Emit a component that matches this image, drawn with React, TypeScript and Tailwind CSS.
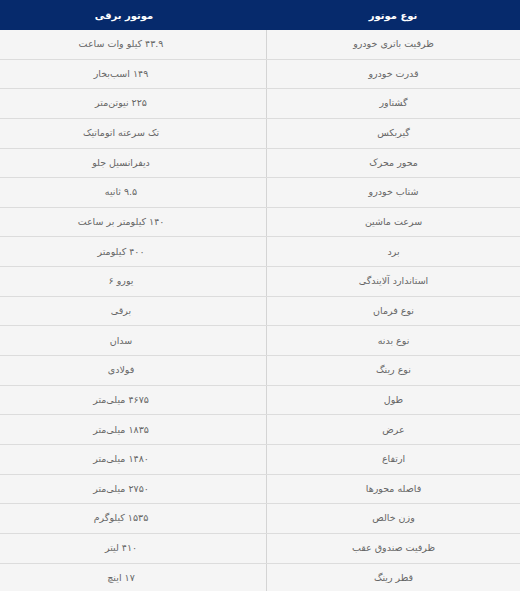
const rows: [string, string][] = [
  ["ظرفیت باتری خودرو", "۴۳.۹ کیلو وات ساعت"],
  ["قدرت خودرو", "۱۴۹ اسب‌بخار"],
  ["گشتاور", "۲۲۵ نیوتن‌متر"],
  ["گیربکس", "تک سرعته اتوماتیک"],
  ["محور محرک", "دیفرانسیل جلو"],
  ["شتاب خودرو", "۹.۵ ثانیه"],
  ["سرعت ماشین", "۱۴۰ کیلومتر بر ساعت"],
  ["برد", "۴۰۰ کیلومتر"],
  ["استاندارد آلایندگی", "یورو ۶"],
  ["نوع فرمان", "برقی"],
  ["نوع بدنه", "سدان"],
  ["نوع رینگ", "فولادی"],
  ["طول", "۴۶۷۵ میلی‌متر"],
  ["عرض", "۱۸۳۵ میلی‌متر"],
  ["ارتفاع", "۱۴۸۰ میلی‌متر"],
  ["فاصله محورها", "۲۷۵۰ میلی‌متر"],
  ["وزن خالص", "۱۵۳۵ کیلوگرم"],
  ["ظرفیت صندوق عقب", "۴۱۰ لیتر"],
  ["قطر رینگ", "۱۷ اینچ"],
];

const App = () => {
  return (
    <div
      dir="rtl"
      className="w-[520px] h-[591px] overflow-hidden bg-[#f5f5f5] font-['DejaVu_Sans',sans-serif]"
    >
      <div className="grid grid-cols-[254px_266px] h-[30px] bg-[#062a6c] text-white text-[10px] font-bold">
        <div className="flex items-center justify-center">نوع موتور</div>
        <div className="flex items-center justify-center pr-[18px]">موتور برقی</div>
      </div>
      {rows.map((row, index) => (
        <div
          key={index}
          className="grid grid-cols-[254px_266px] h-[29.65px] border-b border-[#dcdcdc] text-[#666] text-[9.5px]"
        >
          <div className="flex items-center justify-center border-l border-[#d4d4d4]">{row[0]}</div>
          <div className="flex items-center justify-center pr-[24px]">{row[1]}</div>
        </div>
      ))}
    </div>
  );
};

export default App;
